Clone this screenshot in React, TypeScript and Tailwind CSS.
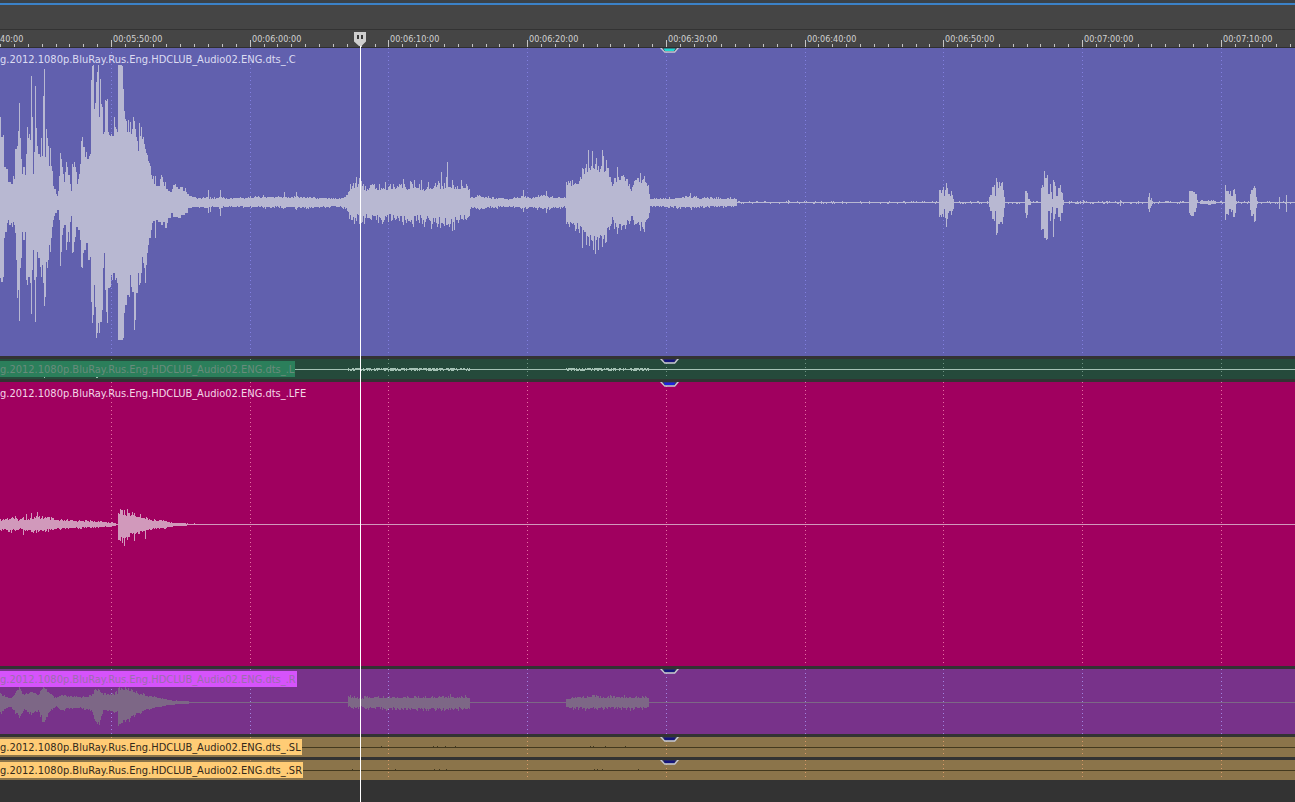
import { useEffect, useState } from "react";
import { clsx } from "clsx";

type Point = [x: number, up: number, down: number];

interface Wave {
  up: number[];
  down: number[];
}

interface Track {
  name: string;
  laneClass: string;
  labelClass: string;
  waveClass: string;
  gridClass: string;
  markerClass: string;
  wave: Wave;
}

const TIMELINE_WIDTH = 2600;
const SECONDS_10 = 138.72;
const FIRST_MAJOR = 111;
const PLAYHEAD = 360;
const CLIP_NAME = "g.2012.1080p.BluRay.Rus.Eng.HDCLUB_Audio02.ENG.dts_.";

const majors = Array.from({ length: 18 }, (_, i) => ({
  x: Math.round(FIRST_MAJOR + (i - 1) * SECONDS_10),
  label: timecode(340 + i * 10),
}));

const minors = Array.from({ length: 170 }, (_, i) => Math.round(FIRST_MAJOR - SECONDS_10 + (i * SECONDS_10) / 10));

function timecode(seconds: number) {
  const mm = String(Math.floor(seconds / 60)).padStart(2, "0");
  const ss = String(seconds % 60).padStart(2, "0");
  return `00:${mm}:${ss}:00`;
}

function noise(n: number) {
  const v = Math.sin(n * 12.9898) * 43758.5453;
  return v - Math.floor(v);
}

// "x:value" pairs, each value holds until the next x
function applySteps(target: number[], text: string) {
  const pairs = text.trim().split(/\s+/).map((p) => p.split(":").map(Number));
  pairs.forEach(([x, v], i) => {
    const end = i + 1 < pairs.length ? pairs[i + 1][0] : x + 1;
    for (let px = x; px < end; px++) target[px] = v;
  });
}

// linear envelope with per-column jitter, most columns stay well under the peak
function applyEnvelope(wave: Wave, points: Point[], jitter: number, seed: number) {
  for (let i = 0; i + 1 < points.length; i++) {
    const [x0, u0, d0] = points[i];
    const [x1, u1, d1] = points[i + 1];
    for (let x = x0; x < x1; x++) {
      const t = (x - x0) / (x1 - x0);
      wave.up[x] = Math.round((u0 + (u1 - u0) * t) * (1 - jitter * Math.sqrt(noise(x + seed))));
      wave.down[x] = Math.round((d0 + (d1 - d0) * t) * (1 - jitter * Math.sqrt(noise(x + seed + 777))));
    }
  }
}

function applySpikes(wave: Wave, spikes: Point[]) {
  for (const [x, u, d] of spikes) {
    wave.up[x] = u;
    wave.down[x] = d;
  }
}

function emptyWave(): Wave {
  return { up: Array(TIMELINE_WIDTH).fill(0), down: Array(TIMELINE_WIDTH).fill(0) };
}

function centerWave() {
  const w = emptyWave();
  applySteps(
    w.up,
    `0:85 1:65 3:67 4:35 6:33 8:20 11:18 13:26 14:23 15:53 17:56 18:71 19:99 20:64 21:43 22:28 23:35 25:27 26:48
     27:75 28:64 29:68 30:62 31:126 32:85 33:28 34:50 35:116 36:74 37:56 38:48 40:45 41:64 42:46 43:106 44:133
     45:45 46:73 47:64 48:56 49:36 50:54 51:36 52:31 53:16 54:13 56:8 57:6 58:11 59:26 60:49 61:43 62:35 63:28
     64:20 65:30 66:40 67:35 68:27 70:18 71:11 72:38 73:35 74:40 75:35 76:30 77:18 78:23 79:28 80:38 81:61 82:65
     83:55 85:45 86:50 87:43 89:46 90:48 91:122 92:136 93:137 94:93 95:99 96:120 97:130 98:137 99:85 100:123
     101:98 102:95 103:68 104:70 105:102 106:101 107:103 108:70 109:67 110:66 111:68 112:66 114:85 115:75 116:73
     117:70 118:137 122:136 123:113 124:91 125:83 126:81 127:70 128:82 129:70 130:80 131:68 132:73 133:85 134:81
     135:73 136:65 137:61 138:51 139:79 140:66 141:75 142:63 143:65 144:58 145:53 146:49 147:47 148:41 149:39
     150:36 151:27 152:23 153:26 154:18 155:26 156:16 160:23 161:27 162:25 163:20 164:16 165:20 166:13 168:11
     170:10 172:13 173:17 175:18 176:15 178:13 180:15 183:11 185:14 186:10 187:8 189:6 192:5 196:4`
  );
  applySteps(
    w.down,
    `0:75 1:79 3:74 4:35 5:29 7:20 8:17 9:22 11:20 12:24 13:19 14:22 15:30 16:57 17:95 18:87 19:118 20:65 21:55
     22:29 23:37 25:29 26:77 27:82 28:74 30:80 31:111 32:67 33:47 34:77 35:119 36:74 37:49 38:55 40:64 41:74 42:62
     43:80 44:103 45:94 46:59 47:65 48:57 49:42 50:49 51:35 52:24 53:17 54:13 55:10 57:7 59:17 60:63 61:49 62:32
     63:25 64:22 66:47 67:39 68:29 69:39 70:19 71:13 72:50 73:49 74:39 75:34 76:24 78:27 80:37 81:64 82:65 83:50
     84:47 86:40 88:57 90:54 91:99 92:120 93:112 94:82 95:104 96:135 97:130 98:120 99:130 100:119 102:107 103:65
     104:50 105:87 106:109 107:120 108:85 110:84 111:72 112:77 113:70 115:77 116:75 117:80 118:137 123:135 124:110
     125:102 127:92 129:94 130:72 131:84 132:89 134:127 135:117 136:90 138:70 139:82 140:80 141:70 142:54 143:60
     144:65 145:80 146:62 147:50 148:42 149:35 151:27 152:20 153:18 155:35 156:17 158:19 161:22 163:19 165:25
     167:20 168:15 171:10 173:14 178:15 181:12 185:10 188:5 192:4 196:4`
  );
  applyEnvelope(
    w,
    [
      [197, 5, 5], [205, 7, 7], [212, 5, 5], [220, 7, 6], [228, 5, 5], [255, 7, 6], [280, 7, 6], [300, 7, 7],
      [318, 6, 6], [330, 6, 6], [340, 5, 5], [346, 7, 7],
    ],
    0.45,
    3
  );
  applyEnvelope(
    w,
    [
      [346, 9, 9], [350, 26, 22], [357, 29, 23], [362, 22, 22], [372, 23, 26], [385, 22, 23], [395, 26, 22],
      [406, 25, 28], [420, 24, 24], [430, 23, 29], [440, 27, 29], [452, 27, 31], [458, 21, 25], [463, 27, 21],
      [470, 23, 21],
    ],
    0.52,
    21
  );
  applyEnvelope(
    w,
    [
      [470, 7, 7], [480, 8, 9], [490, 6, 6], [508, 4, 5], [516, 6, 6], [523, 9, 8], [530, 5, 6], [541, 9, 8],
      [555, 7, 7], [566, 6, 6],
    ],
    0.45,
    40
  );
  applyEnvelope(
    w,
    [
      [566, 22, 26], [572, 26, 30], [580, 30, 34], [583, 42, 44], [590, 46, 48], [597, 48, 50], [604, 48, 47],
      [608, 40, 38], [612, 24, 22], [617, 34, 34], [625, 34, 32], [631, 15, 18], [635, 30, 30], [645, 32, 31],
      [648, 21, 21], [649, 12, 12], [650, 6, 6],
    ],
    0.38,
    55
  );
  applyEnvelope(
    w,
    [[650, 5, 5], [665, 5, 5], [678, 6, 6], [690, 8, 7], [700, 6, 6], [720, 5, 5], [737, 5, 5]],
    0.5,
    70
  );
  for (let x = 738; x < TIMELINE_WIDTH; x++) {
    if (noise(x + 5) > 0.84) w.up[x] = 1;
    if (noise(x + 95) > 0.84) w.down[x] = 1;
  }
  applyEnvelope(w, [[1200, 2, 2], [1216, 2, 2]], 0.5, 9);
  applySpikes(w, [
    [208, 12, 10], [210, 5, 9], [220, 12, 13], [284, 10, 5], [296, 10, 7], [356, 25, 18], [359, 24, 21], [441, 30, 20],
    [447, 40, 22], [452, 22, 28], [523, 12, 9], [546, 11, 10], [582, 34, 45], [588, 52, 34], [592, 51, 38],
    [595, 38, 51], [602, 52, 44], [603, 46, 36], [606, 42, 39], [617, 35, 31], [640, 29, 28], [690, 9, 5],
    [788, 2, 1], [1083, 2, 1], [1120, 2, 3], [1279, 5, 6], [1286, 7, 9],
  ]);
  applySteps(w.up, "939:12 941:9 942:12 943:15 944:6 945:12 946:19 947:14 948:8 950:6 951:11 952:7 953:3 954:0");
  applySteps(w.down, "939:14 940:12 941:14 942:11 943:14 944:6 945:15 946:24 947:16 948:10 949:8 951:12 952:8 953:6 954:0");
  applySteps(w.up, "989:5 990:7 992:15 994:17 995:6 996:24 997:20 998:14 999:20 1000:16 1001:19 1002:20 1003:12 1004:5 1005:0");
  applySteps(w.down, "989:4 990:8 992:16 994:18 995:8 996:32 997:30 998:21 1000:19 1002:21 1003:14 1004:5 1005:0");
  applySteps(w.up, "1025:11 1027:9 1028:3 1030:1 1031:0");
  applySteps(w.down, "1025:10 1026:15 1027:12 1028:2 1031:0");
  applySteps(
    w.up,
    `1041:14 1042:17 1043:15 1044:31 1045:24 1047:27 1048:8 1050:18 1051:10 1052:3 1053:22 1054:20 1055:16 1056:6
     1058:14 1060:17 1061:10 1062:9 1063:2 1064:0`
  );
  applySteps(
    w.down,
    `1041:27 1042:26 1044:35 1046:37 1047:36 1048:8 1050:18 1051:10 1052:4 1053:34 1054:16 1055:11 1056:5 1058:14
     1060:18 1061:10 1063:2 1064:0`
  );
  applySteps(w.up, "1148:5 1149:9 1150:2 1151:4 1152:1");
  applySteps(w.down, "1148:6 1149:9 1150:5 1151:3 1152:1");
  applySteps(w.up, "1189:11 1193:10 1195:8 1197:2 1198:0");
  applySteps(w.down, "1189:10 1190:12 1191:13 1194:9 1196:5 1197:0");
  applySteps(w.up, "1225:17 1226:11 1228:11 1229:8 1230:11 1231:6 1233:12 1234:13 1235:8 1236:1");
  applySteps(w.down, "1225:17 1226:11 1228:12 1229:6 1231:9 1232:7 1233:14 1235:10 1236:1");
  applySteps(w.up, "1250:8 1251:12 1253:14 1254:16 1255:14 1256:5 1257:1");
  applySteps(w.down, "1250:7 1251:13 1253:11 1254:19 1255:18 1256:5 1257:1");
  return w;
}

function lfeWave() {
  const w = emptyWave();
  applyEnvelope(
    w,
    [
      [0, 7, 8], [10, 9, 9], [20, 7, 7], [35, 10, 9], [48, 9, 8], [55, 6, 6], [70, 5, 5], [85, 5, 4], [108, 3, 3],
      [116, 1, 1],
    ],
    0.55,
    12
  );
  applyEnvelope(
    w,
    [
      [118, 14, 17], [125, 15, 20], [130, 14, 14], [138, 11, 11], [146, 9, 8], [152, 5, 5], [164, 5, 5], [170, 2, 2],
      [184, 1, 1], [196, 0, 0],
    ],
    0.45,
    30
  );
  applySpikes(w, [
    [23, 7, 10], [26, 10, 5], [31, 11, 7], [37, 12, 5], [42, 8, 6], [118, 11, 15], [120, 15, 16], [122, 14, 18],
    [124, 14, 21], [127, 15, 15], [134, 11, 16], [145, 5, 14], [160, 4, 3], [187, 1, 0], [194, 1, 0],
  ]);
  return w;
}

function rightWave() {
  const w = emptyWave();
  applyEnvelope(
    w,
    [
      [0, 11, 12], [5, 7, 7], [11, 5, 5], [16, 13, 13], [19, 17, 18], [24, 9, 9], [31, 14, 14], [38, 9, 9],
      [44, 19, 26], [49, 11, 10], [56, 4, 4], [61, 9, 10], [67, 7, 7], [80, 6, 6], [91, 8, 9], [96, 16, 24],
      [99, 16, 24], [103, 9, 9], [117, 11, 11], [118, 17, 27], [124, 17, 24], [132, 15, 18], [140, 10, 12],
      [150, 7, 7], [163, 4, 4], [172, 2, 2], [184, 1, 1], [195, 0, 0],
    ],
    0.32,
    8
  );
  applyEnvelope(
    w,
    [
      [348, 7, 5], [352, 9, 8], [358, 6, 6], [370, 7, 8], [400, 7, 9], [425, 7, 9], [450, 8, 9], [469, 7, 8],
      [470, 1, 1],
    ],
    0.5,
    17
  );
  applyEnvelope(w, [[566, 6, 7], [590, 8, 9], [610, 8, 7], [630, 7, 8], [648, 7, 7], [649, 1, 1]], 0.5, 27);
  return w;
}

function leftWave() {
  const w = emptyWave();
  for (let x = 348; x < 649; x++) {
    if (x > 469 && x < 566) continue;
    w.up[x] = noise(x + 60) > 0.45 ? 1 : 0;
    w.down[x] = noise(x + 160) > 0.5 ? 1 : 0;
  }
  applySpikes(w, [[44, 0, 8], [96, 0, 8], [97, 0, 8]]);
  return w;
}

function surroundWave(points: number[]) {
  const w = emptyWave();
  points.forEach((x) => (w.up[x] = 1));
  return w;
}

const tracks: Track[] = [
  {
    name: "C",
    laneClass: "h-[308px] bg-[#6160ae]",
    labelClass: "top-[3px] text-[#dcdcf2]",
    waveClass: "fill-[#b8b8d2]",
    gridClass: "stroke-[#8280e0]",
    markerClass: "fill-[#1fd8cf]",
    wave: centerWave(),
  },
  {
    name: "L",
    laneClass: "h-[20px] bg-[#254a3b]",
    labelClass: "top-[2px] bg-[#2b7f5b] text-[#698c7c]",
    waveClass: "fill-[#a5c2b5]",
    gridClass: "stroke-[#6f9484]",
    markerClass: "fill-[#14147c]",
    wave: leftWave(),
  },
  {
    name: "LFE",
    laneClass: "h-[284px] bg-[#a0005f]",
    labelClass: "top-[3px] text-[#f3d5e6]",
    waveClass: "fill-[#d199bb]",
    gridClass: "stroke-[#e66fa4]",
    markerClass: "fill-[#1a22dc]",
    wave: lfeWave(),
  },
  {
    name: "R",
    laneClass: "h-[65px] bg-[#78328a]",
    labelClass: "top-[2px] bg-[#d653fb] text-[#9d6cae]",
    waveClass: "fill-[#7d6786]",
    gridClass: "stroke-[#a284e0]",
    markerClass: "fill-[#14147c]",
    wave: rightWave(),
  },
  {
    name: "SL",
    laneClass: "h-[20px] bg-[#8b744a]",
    labelClass: "top-[2px] bg-[#ffcc75] text-[#33291a]",
    waveClass: "fill-[#43391f]",
    gridClass: "stroke-[#d99a68]",
    markerClass: "fill-[#14147c]",
    wave: surroundWave([381, 433, 437, 445, 455, 590, 593, 605, 625]),
  },
  {
    name: "SR",
    laneClass: "h-[20px] bg-[#8b744a]",
    labelClass: "top-[2px] bg-[#ffcc75] text-[#33291a]",
    waveClass: "fill-[#43391f]",
    gridClass: "stroke-[#d99a68]",
    markerClass: "fill-[#14147c]",
    wave: surroundWave([352, 395, 434, 439, 446, 594, 597, 602, 638]),
  },
];

function wavePath({ up, down }: Wave) {
  let d = "";
  for (let x = 0; x < TIMELINE_WIDTH; ) {
    const u = up[x];
    const b = down[x];
    let end = x + 1;
    while (end < TIMELINE_WIDTH && up[end] === u && down[end] === b) end++;
    d += `M${x} ${-u}H${end}V${b + 1}H${x}Z`;
    x = end;
  }
  return d;
}

function useWindowWidth() {
  const [width, setWidth] = useState(window.innerWidth);
  useEffect(() => {
    const onResize = () => setWidth(window.innerWidth);
    window.addEventListener("resize", onResize);
    return () => window.removeEventListener("resize", onResize);
  }, []);
  return width;
}

function GridLines({ className }: { className: string }) {
  return (
    <svg aria-hidden="true" className="absolute inset-0 h-full w-full" shapeRendering="crispEdges">
      {majors.map(({ x }) => (
        <line key={x} x1={x + 0.5} x2={x + 0.5} y1="0" y2="100%" strokeDasharray="1 3" className={className} />
      ))}
    </svg>
  );
}

function ClipMarker({ className }: { className: string }) {
  return (
    <svg aria-hidden="true" viewBox="0 0 19 5" className="absolute top-0 left-[660px] h-[5px] w-[19px]">
      <path d="M0 0H19L15 4.8H4.5Z" className="fill-[#c6c8d4]" />
      <path d="M2 0H17L14.5 3.2H4.8Z" className="fill-[#3b3b52]" />
      <path d="M3.5 0.5H15.5L14 3H5Z" className={className} />
    </svg>
  );
}

function TrackLane({ track }: { track: Track }) {
  return (
    <section aria-label={`Track ${track.name}`} className={clsx("relative w-full overflow-hidden", track.laneClass)}>
      <GridLines className={track.gridClass} />
      <div className="absolute inset-x-0 top-1/2">
        <svg aria-hidden="true" className="block h-px w-full overflow-visible" shapeRendering="crispEdges">
          <path d={wavePath(track.wave)} className={track.waveClass} />
        </svg>
      </div>
      <span className={clsx("absolute left-0 h-4 pr-px text-[11px] leading-[18px] whitespace-nowrap", track.labelClass)}>
        {CLIP_NAME}
        {track.name}
      </span>
      <ClipMarker className={track.markerClass} />
    </section>
  );
}

function Ruler() {
  const width = useWindowWidth();

  return (
    <header className="relative h-[18px] w-full overflow-hidden border-b border-[#2f2f2f] bg-[#454545]">
      <svg aria-hidden="true" className="absolute inset-0 h-full w-full" shapeRendering="crispEdges">
        {minors.map((x, i) => (
          <rect key={x} x={x} y={i % 10 ? 14 : 10} width="1" height={i % 10 ? 3 : 7} className="fill-[#c4c4c4]" />
        ))}
      </svg>
      {majors
        .filter(({ x }) => x < width)
        .map(({ x, label }) => (
          <time
            key={label}
            className="absolute top-0 text-[9px] leading-[19px] whitespace-nowrap text-[#d2d2d2]"
            style={{ left: Math.max(0, x + 2) }}
          >
            {x < 0 ? label.slice(6) : label}
          </time>
        ))}
    </header>
  );
}

function Playhead() {
  return (
    <div className="pointer-events-none absolute top-[32px] bottom-0 z-10" style={{ left: PLAYHEAD }}>
      <div className="h-full w-px bg-white" />
      <svg aria-hidden="true" viewBox="0 0 12 14" className="absolute top-0 -left-1.5 h-[14px] w-3">
        <path d="M0 0H12V9.5L7.5 14H5L0 9.5Z" className="fill-[#cfcfcf]" />
        <path d="M3 3H5V7H3ZM7 3H9V7H7Z" className="fill-[#3a3a3a]" />
      </svg>
    </div>
  );
}

export default function App() {
  return (
    <main className="relative flex min-h-screen w-full flex-col overflow-hidden bg-[#333333] font-['DejaVu_Sans_Condensed','DejaVu_Sans',sans-serif]">
      <div className="h-[3px] bg-[#3b4248]" />
      <div className="h-[2px] bg-[#3b82c8]" />
      <div className="h-[25px] border-b border-[#333333] bg-[#454545]" />
      <Ruler />
      <div className="flex flex-col gap-[3px]">
        {tracks.map((track) => (
          <TrackLane key={track.name} track={track} />
        ))}
      </div>
      <Playhead />
    </main>
  );
}
